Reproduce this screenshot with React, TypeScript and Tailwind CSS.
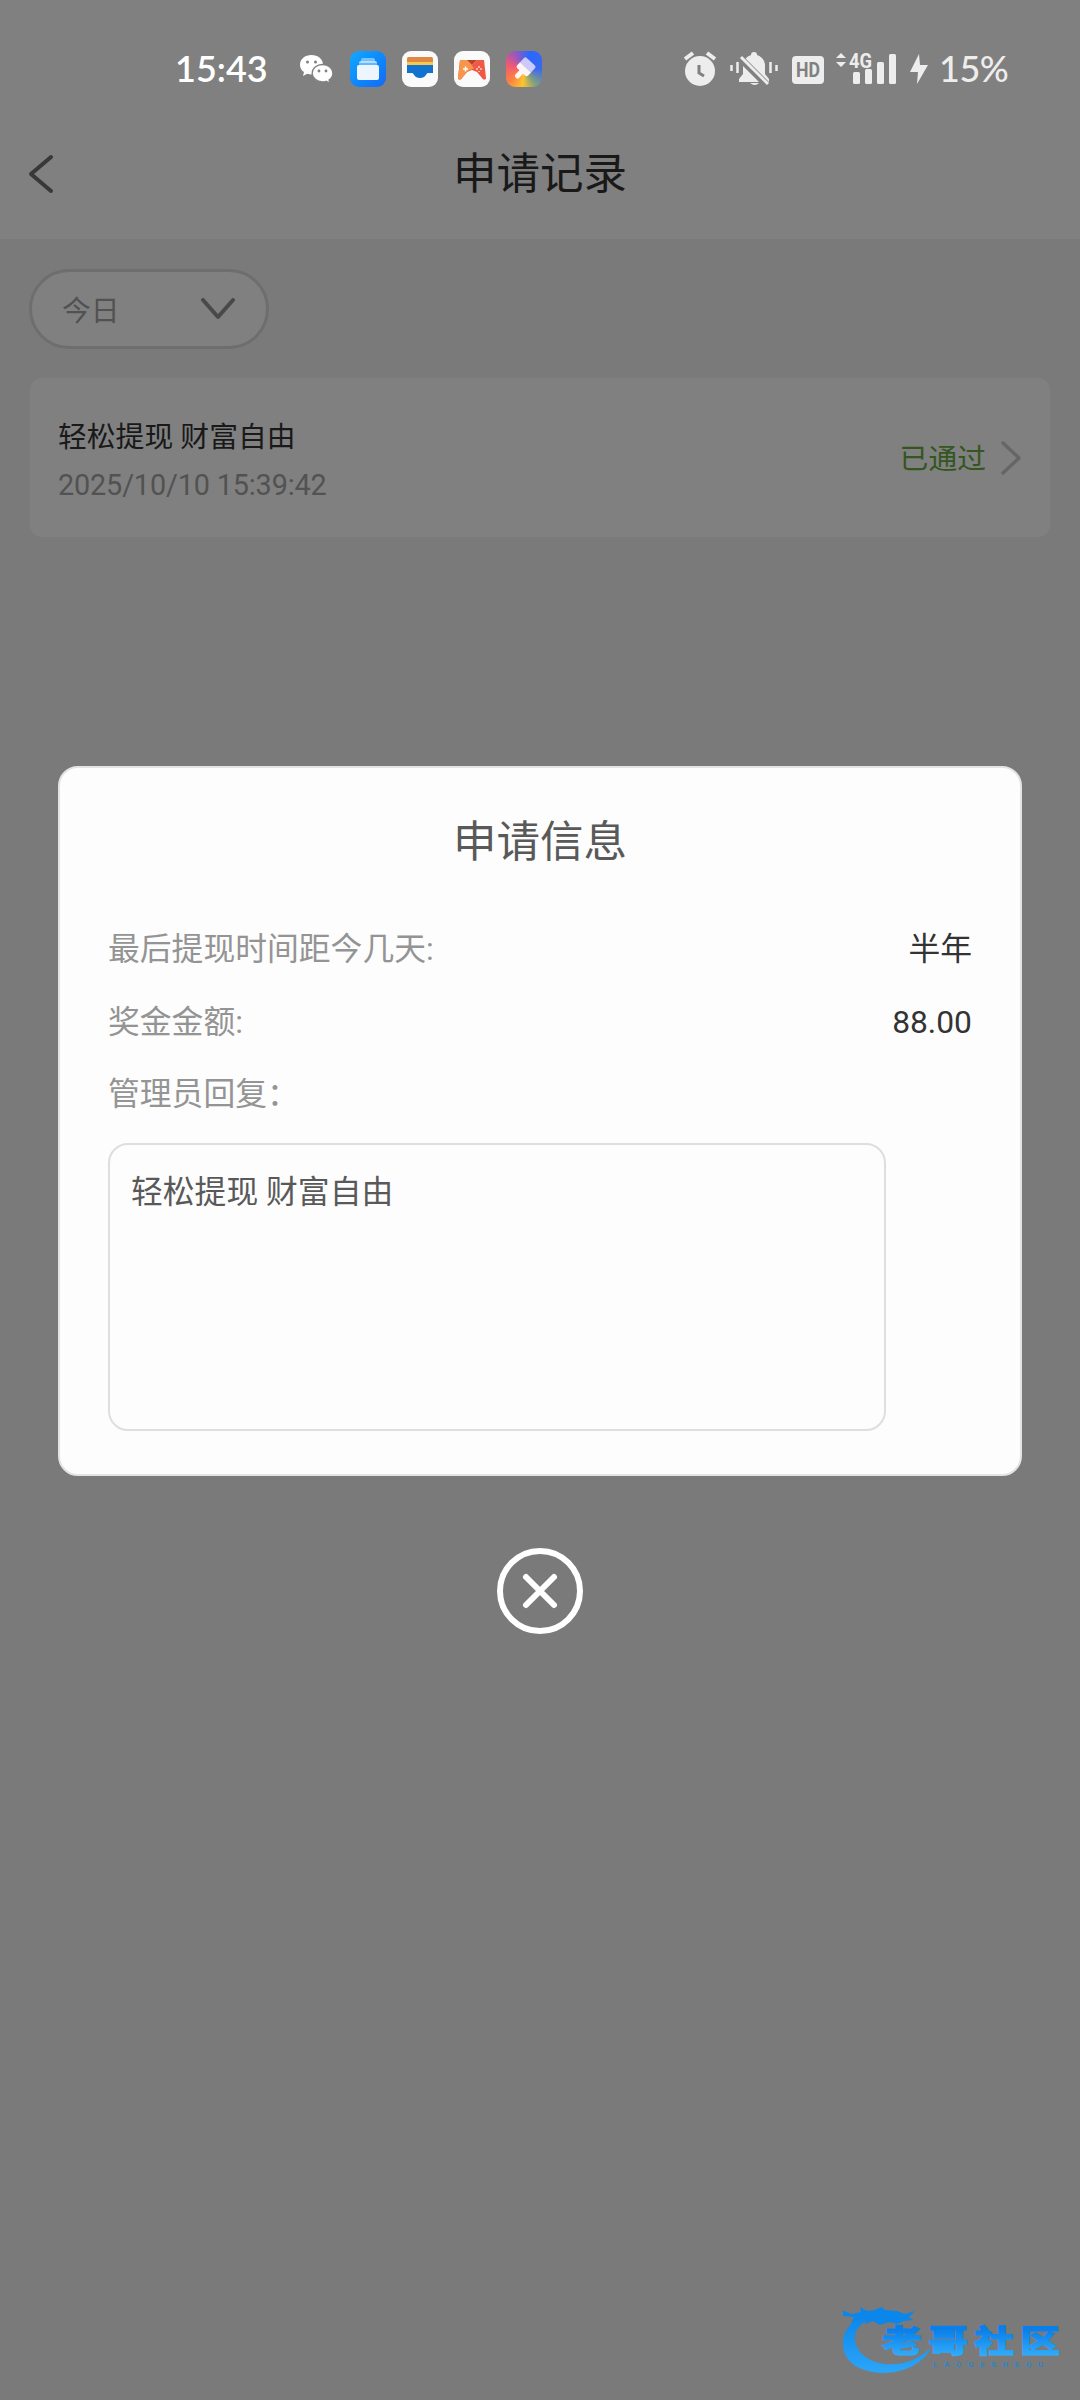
import type { ReactNode } from "react";

const sans = "font-['Roboto','Noto_Sans_CJK_SC',sans-serif]";

function AppTile({ children, className }: { children?: ReactNode; className: string }) {
  return <span className={`flex h-9 w-9 items-center justify-center rounded-[9px] ${className}`}>{children}</span>;
}

function StatusBar() {
  return (
    <div className="flex h-[138px] items-start justify-between pt-[50px] pr-[61px] pl-[175px]">
      <div className="flex h-[38px] items-center">
        <span className="w-[124px] pb-0.5 font-['Lato','Noto_Sans_CJK_SC',sans-serif] text-[36px] leading-none font-semibold text-white">
          15:43
        </span>
        <svg className="mr-4 h-[30px] w-[35px]" viewBox="0 0 35 30" fill="none">
          <path d="M12.500 1C6 1 1 5.200 1 10.700c0 3 1.500 5.600 4 7.400L4 22l4.200-2.300c1.500.5 2.800.7 4.300.7C19 20.400 24 16.200 24 10.700S19 1 12.500 1z" fill="white" />
          <path d="M23.500 10.500c-5.700 0-10.300 3.900-10.300 8.700s4.600 8.700 10.300 8.700c1.300 0 2.600-.2 3.700-.6L31 29.500l-1-3.500c2.400-1.600 3.900-4 3.900-6.800 0-4.800-4.700-8.700-10.400-8.700z" fill="white" stroke="#808080" strokeWidth="1.300" />
          <circle cx="8.500" cy="8" r="1.500" fill="#808080" />
          <circle cx="16.500" cy="8" r="1.500" fill="#808080" />
          <circle cx="20" cy="17" r="1.400" fill="#808080" />
          <circle cx="27" cy="17" r="1.400" fill="#808080" />
        </svg>
        <div className="flex gap-4">
          <AppTile className="bg-linear-to-br from-[#16a8ff] to-[#1668f6]">
            <svg className="h-9 w-9" viewBox="0 0 36 36">
              <rect x="11" y="7" width="14" height="5" rx="2" fill="#72c4ff" />
              <rect x="9" y="10" width="18" height="5" rx="2" fill="#b3deff" />
              <rect x="7" y="14" width="22" height="15" rx="2" fill="#edf6ff" />
              <path d="M7.500 13h21" stroke="#1b8fff" strokeWidth="1" />
            </svg>
          </AppTile>
          <AppTile className="bg-[#fafafa]">
            <svg className="h-9 w-9" viewBox="0 0 36 36">
              <rect x="5" y="6" width="26" height="10" rx="1.500" fill="#e28643" />
              <path d="M5 11h26v6H5z" fill="#f4c94f" />
              <path d="M5 14h26v8h-5c-2 0-2 5-8 5s-6-5-8-5H5z" fill="#1272cf" />
            </svg>
          </AppTile>
          <AppTile className="bg-[#fafafa]">
            <svg className="h-9 w-9" viewBox="0 0 36 36">
              <path d="M6 9h7l5 5 5-5h7l2 18c0 2-3 2-4 0l-5-6-5-2-5 2-5 6c-1 2-4 2-4 0z" fill="#ef5945" />
              <path d="M6 9h7l7 8-7 4-5 6c-1 2-4 2-4 0z" fill="#f7954b" />
              <path d="M13 9h10l-5 5z" fill="#bd4028" />
              <path d="M9 18h5M11.500 15.500v5" stroke="white" strokeWidth="1.500" />
              <path d="M25 15v2M22 18h2M26 18h2M25 20v1" stroke="#ffd1bd" strokeWidth="1.500" />
            </svg>
          </AppTile>
          <AppTile className="bg-[conic-gradient(from_20deg,#2868ff,#3c68ee_70deg,#85a17d_125deg,#ffc52e_165deg,#fa8241_210deg,#f05876_265deg,#8c59c4_315deg,#2868ff)]">
            <svg className="h-9 w-9" viewBox="0 0 36 36">
              <g transform="rotate(43 18 18)">
                <rect x="10.500" y="8" width="15" height="10" rx="2" fill="#cbcafa" />
                <path d="M10.500 16h15v4q0 2-2 2h-3v6q0 2-2.500 2t-2.500-2v-6h-3q-2 0-2-2z" fill="#fff5f4" />
              </g>
            </svg>
          </AppTile>
        </div>
      </div>

      <div className="flex h-[38px] items-center">
        <svg className="h-[38px] w-[254px]" viewBox="683 50 254 38" fill="#ededed">
          <circle cx="700" cy="71" r="15" />
          <path d="m685 59 8-6M715 59l-8-6" stroke="#ededed" strokeWidth="4" />
          <path d="M699 65v8l5 3" stroke="#808080" strokeWidth="3" fill="none" />
          <path d="M754 52q3 0 3 3 8 3 8 11v8l4 5v3h-30v-3l4-5v-8q0-8 8-11 0-3 3-3zM750 83h9q-4 4-9 0z" />
          <path d="m738 56 29 29" stroke="#808080" strokeWidth="7" />
          <path d="m741 57 27 27" stroke="#ededed" strokeWidth="3" />
          <path d="M731.500 65v6M737.500 62v11M770.500 62v11M776.500 65v6" stroke="#ededed" strokeWidth="2.500" />
          <rect x="792" y="56" width="32" height="28" rx="4" />
          <text x="808" y="77" textAnchor="middle" fill="#808080" fontFamily="Roboto" fontSize="21" fontWeight="700" textLength="24" lengthAdjust="spacingAndGlyphs">HD</text>
          <path d="m836 58 5-5 5 5zM836 62l5 5 5-5z" />
          <rect x="853" y="72" width="7" height="12" rx="1.500" />
          <rect x="865" y="69" width="7" height="15" rx="1.500" />
          <rect x="877" y="62" width="7" height="22" rx="1.500" />
          <rect x="889" y="54" width="7" height="30" rx="1.500" />
          <text x="849" y="68" fontFamily="Roboto" fontSize="20" fontWeight="700" stroke="#808080" strokeWidth="2" paintOrder="stroke" textLength="23" lengthAdjust="spacingAndGlyphs">4G</text>
          <path d="m919 54-9 18h8l-1 12 11-19h-8z" />
        </svg>
        <span className="w-[82px] pb-0.5 pl-0.5 font-['Lato','Noto_Sans_CJK_SC',sans-serif] text-[36px] leading-[38px] font-medium tracking-[-0.5px] text-[#ededed]">
          15%
        </span>
      </div>
    </div>
  );
}

function RecordCard() {
  return (
    <div className="mx-[30px] mt-[29px] flex h-[159px] items-center justify-between rounded-xl bg-[#808080] pr-[29px] pl-[28px]">
      <div className="pt-[6px] text-[28.8px]">
        <p className="leading-[48px] text-[#191919]">轻松提现 财富自由</p>
        <p className="leading-[48px] tracking-[-0.15px] text-[#525252]">2025/10/10 15:39:42</p>
      </div>
      <div className="flex items-center gap-[15px]">
        <span className="pt-1 text-[28.8px] leading-none text-[#34561f]">已通过</span>
        <svg className="h-[34px] w-[20px]" viewBox="0 0 20 34" fill="none" stroke="#666666" strokeWidth="3.500" strokeLinecap="round" strokeLinejoin="round">
          <path d="m2 2 16 15L2 32" />
        </svg>
      </div>
    </div>
  );
}

const rows = [
  ["最后提现时间距今几天:", "半年"],
  ["奖金金额:", "88.00"],
  ["管理员回复：", ""],
];

function InfoDialog() {
  return (
    <div className="absolute inset-x-0 top-[766px] flex flex-col items-center">
      <section className="h-[710px] w-[964px] rounded-[20px] border-2 border-[#e4e4e4] bg-[#fdfdfd] px-[48px] pt-[43px]">
        <h2 className="text-center text-[43.5px] leading-[64px] text-[#595959]">申请信息</h2>
        <div className="mt-[39px] text-[31.8px]">
          {rows.map(([label, value]) => (
            <div key={label} className="flex h-[72.500px] items-center justify-between">
              <span className="text-[#949494]">{label}</span>
              <span className="text-[#333333]">{value}</span>
            </div>
          ))}
        </div>
        <div className="mt-[11px] h-[288px] w-[778px] rounded-[20px] border-2 border-[#dedede] px-[21px] pt-[23px] text-[31.8px] leading-[48px] text-[#595959]">
          轻松提现 财富自由
        </div>
      </section>
      <button className="mt-[72px]">
        <svg className="h-[86px] w-[86px]" viewBox="0 0 86 86" fill="none" stroke="white" strokeWidth="6" strokeLinecap="round">
          <circle cx="43" cy="43" r="40" />
          <path d="m29 29 28 28M57 29 29 57" />
        </svg>
      </button>
    </div>
  );
}

// Dragon ring with the community name set over its open side
function CommunityLogo() {
  return (
    <svg className="absolute right-0 bottom-0 h-[120px] w-[260px]" viewBox="0 0 260 120">
      <defs>
        <linearGradient id="ring" x1="0" y1="0" x2="0" y2="1">
          <stop stopColor="#0b84ea" />
          <stop offset="1" stopColor="#2ba6f8" />
        </linearGradient>
        <linearGradient id="word" x1="0" y1="0" x2="0" y2="1">
          <stop offset="0.3" stopColor="#087fea" />
          <stop offset="0.9" stopColor="#32adfa" />
        </linearGradient>
      </defs>
      <path d="M55 33C17 38 13 78 42 89c26 10 60 0 69-22-13 15-38 22-58 14-25-11-24-37 2-43z" fill="url(#ring)" />
      <path d="m23 30 8 4 10-2-1-5 7 4 7-1 8-3 3 3 12 1 8 3 10-3-6 6 4 3-9 1-7 3-8-2-9 3-7-4-8 3 2-6-8 1-8 4 3-6-11-1z" fill="#0b87eb" />
      <text x="48.500" y="72" transform="scale(1.280 1)" letterSpacing="5" fontFamily="'Noto Sans CJK SC', sans-serif" fontSize="31" fontWeight="900" fill="url(#word)" stroke="url(#word)" strokeWidth="1.200">老哥社区</text>
      <text x="113" y="87" textLength="110" lengthAdjust="spacing" fontFamily="Roboto" fontSize="8" fontWeight="700" fill="#2a86c9">LAOGESHEQU</text>
    </svg>
  );
}

export default function App() {
  return (
    <main className={`relative h-[2400px] w-[1080px] overflow-hidden bg-[#7a7a7a] ${sans}`}>
      <header className="h-[239px] bg-[#808080]">
        <StatusBar />
        <div className="grid h-[72px] grid-cols-[80px_1fr_80px] items-center">
          <svg className="ml-[28px] h-[40px] w-[26px]" viewBox="0 0 26 40" fill="none" stroke="#383838" strokeWidth="4" strokeLinecap="round" strokeLinejoin="round">
            <path d="M23 3 3 20l20 17" />
          </svg>
          <h1 className="pt-0.5 text-center text-[43.5px] leading-none text-[#191919]">申请记录</h1>
        </div>
      </header>

      <button className="mt-[30px] ml-[29px] flex h-[80px] w-[240px] items-center justify-between rounded-full border-3 border-[#6e6e6e] bg-[#808080] pr-[30px] pl-[30px]">
        <span className="pt-1 text-[28.8px] leading-none text-[#525252]">今日</span>
        <svg className="h-[22px] w-[36px]" viewBox="0 0 36 22" fill="none" stroke="#494949" strokeWidth="4" strokeLinecap="round" strokeLinejoin="round">
          <path d="m3 2 15 17L33 2" />
        </svg>
      </button>

      <RecordCard />
      <InfoDialog />
      <CommunityLogo />
    </main>
  );
}
